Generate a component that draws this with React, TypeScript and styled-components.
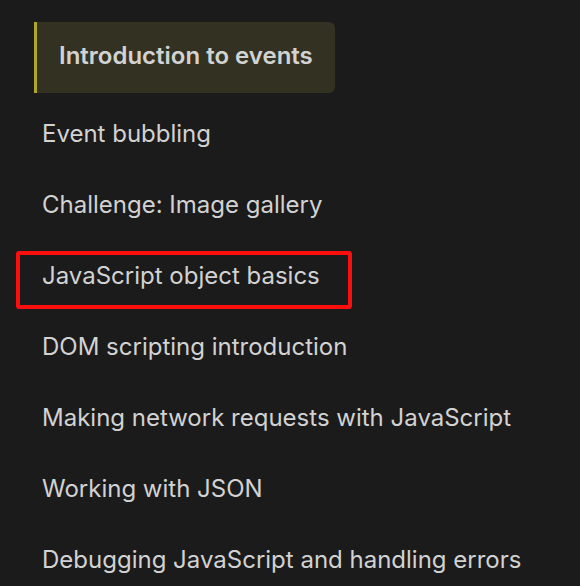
import React from 'react';
import styled, { createGlobalStyle } from 'styled-components';

interface NavLink {
    id: number;
    title: string;
    active?: boolean;
    highlighted?: boolean;
}

const GlobalStyle = createGlobalStyle`
  html, body {
    margin: 0;
    padding: 0;
    background: #1b1b1b;
  }
  body {
    font-family: Inter, "Noto Sans", "Liberation Sans", sans-serif;
    -webkit-font-smoothing: antialiased;
  }
`;

const Sidebar = styled.nav`
  width: 580px;
  height: 586px;
  overflow: hidden;
  box-sizing: border-box;
  padding: 22px 0 0 34px;
  background: #1b1b1b;
`;

const LinkList = styled.ul`
  list-style: none;
  margin: 0;
  padding: 0;
  display: flex;
  flex-direction: column;
  align-items: flex-start;
`;

const LinkItem = styled.li<{ $active?: boolean }>`
  position: relative;
  box-sizing: border-box;
  height: 71px;
  padding: ${(p) => (p.$active ? '19px 22px 0 22px' : '19px 8px 0 8px')};
  margin-bottom: ${(p) => (p.$active ? '7px' : '0')};
  border-left: ${(p) => (p.$active ? '3px solid #b1a62c' : 'none')};
  border-radius: ${(p) => (p.$active ? '0 6px 6px 0' : '0')};
  background: ${(p) => (p.$active ? '#333222' : 'transparent')};
  font-size: 24px;
  line-height: 29px;
  font-weight: ${(p) => (p.$active ? 600 : 400)};
  color: #d2d2d2;
  white-space: nowrap;
`;

const Highlight = styled.span`
  position: absolute;
  left: -18px;
  top: 9px;
  width: 336px;
  height: 58px;
  box-sizing: border-box;
  border: 4px solid #fb0e0e;
  border-radius: 3px;
  pointer-events: none;
`;

const links: NavLink[] = [
    { id: 1, title: 'Introduction to events', active: true },
    { id: 2, title: 'Event bubbling' },
    { id: 3, title: 'Challenge: Image gallery' },
    { id: 4, title: 'JavaScript object basics', highlighted: true },
    { id: 5, title: 'DOM scripting introduction' },
    { id: 6, title: 'Making network requests with JavaScript' },
    { id: 7, title: 'Working with JSON' },
    { id: 8, title: 'Debugging JavaScript and handling errors' },
];

const App: React.FC = () => {
    return (
        <>
            <GlobalStyle />
            <Sidebar>
                <LinkList>
                    {links.map((link) => (
                        <LinkItem key={link.id} $active={link.active}>
                            {link.title}
                            {link.highlighted && <Highlight />}
                        </LinkItem>
                    ))}
                </LinkList>
            </Sidebar>
        </>
    );
};

export default App;
